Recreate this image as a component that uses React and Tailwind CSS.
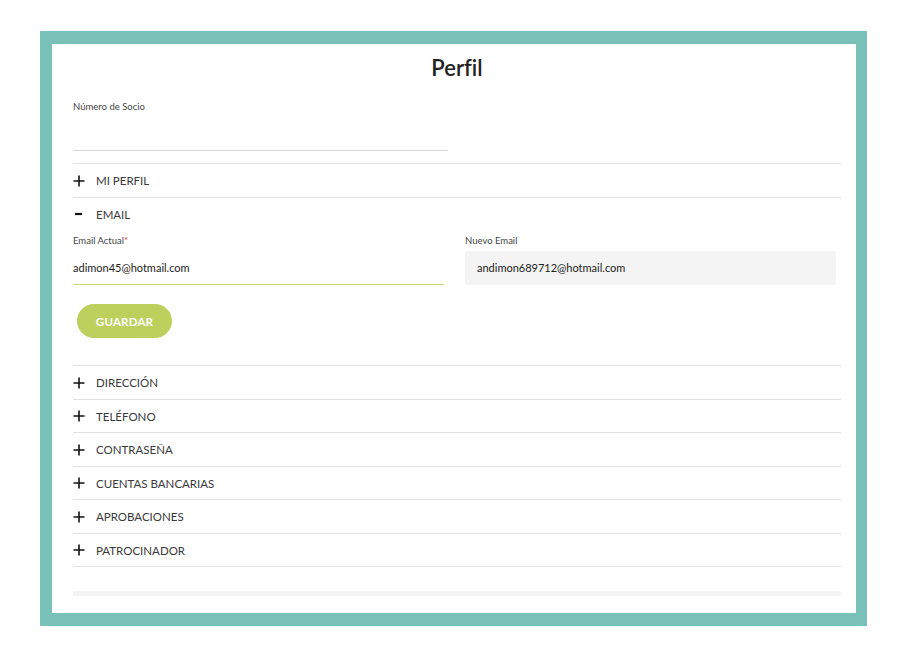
import React from "react";

const sections = ["DIRECCIÓN", "TELÉFONO", "CONTRASEÑA", "CUENTAS BANCARIAS", "APROBACIONES", "PATROCINADOR"];

function Plus() {
  return (
    <svg width="12" height="12" viewBox="0 0 12 12" className="shrink-0">
      <path d="M6 0.5V11.5M0.5 6H11.5" stroke="#111" strokeWidth="1.6" />
    </svg>
  );
}

function Minus() {
  return (
    <svg width="12" height="12" viewBox="0 0 12 12" className="shrink-0">
      <path d="M2 6H9" stroke="#111" strokeWidth="2.2" />
    </svg>
  );
}

function Row({ label, open }) {
  return (
    <div className="flex h-[32.5px] items-center gap-[11px] pt-[1px] text-[11.5px] text-[#3a3a3a]">
      {open ? <Minus /> : <Plus />}
      <span>{label}</span>
    </div>
  );
}

export default function App() {
  return (
    <div className="h-[655px] w-[907px] bg-white pl-[40px] pt-[31px] [font-variant-ligatures:none]" style={{ fontFamily: "Lato, 'Noto Sans', sans-serif" }}>
      <div className="h-[595px] w-[827px] border-b-[13px] border-l-[12px] border-r-[11px] border-t-[13px] border-[#78c0b8] bg-white pl-[21px] pr-[15px] pt-[10px]">
        <h1 className="text-center text-[22px] font-semibold leading-[28px] text-[#222]">Perfil</h1>

        <div className="mt-[18px] text-[9.5px] leading-[14px] text-[#444]">Número de Socio</div>
        <div className="h-[37px] w-[375px] border-b border-[#d4d4d4]" />

        <div className="mt-[12px] border-t border-[#e2e2e2]">
          <div className="border-b border-[#e2e2e2]">
            <Row label="MI PERFIL" />
          </div>

          <div className="border-b border-[#e2e2e2] pb-[27px]">
            <Row label="EMAIL" open />
            <div className="mt-[5px] grid w-[763px] grid-cols-2 gap-x-[21px]">
              <div>
                <div className="text-[9.5px] leading-[12px] text-[#444]">
                  Email Actual<span className="text-[#d33]">*</span>
                </div>
                <div className="mt-[5px] flex h-[33px] items-center border-b-[1.5px] border-[#c5d878] text-[11px] text-[#222]">
                  adimon45@hotmail.com
                </div>
              </div>
              <div>
                <div className="text-[9.5px] leading-[12px] text-[#444]">Nuevo Email</div>
                <div className="mt-[4px] flex h-[34px] items-center rounded-[3px] bg-[#f4f4f4] pl-[12px] text-[11px] text-[#222]">
                  andimon689712@hotmail.com
                </div>
              </div>
            </div>
            <button className="ml-[4px] mt-[19px] h-[34px] w-[95px] rounded-full bg-[#bdd05e] pt-[1px] text-[11.5px] font-bold tracking-[0.2px] text-white">
              GUARDAR
            </button>
          </div>

          {sections.map((s) => (
            <div key={s} className="border-b border-[#e2e2e2]">
              <Row label={s} />
            </div>
          ))}
        </div>

        <div className="mt-[24px] h-[5px] bg-[#f4f4f4]" />
      </div>
    </div>
  );
}
